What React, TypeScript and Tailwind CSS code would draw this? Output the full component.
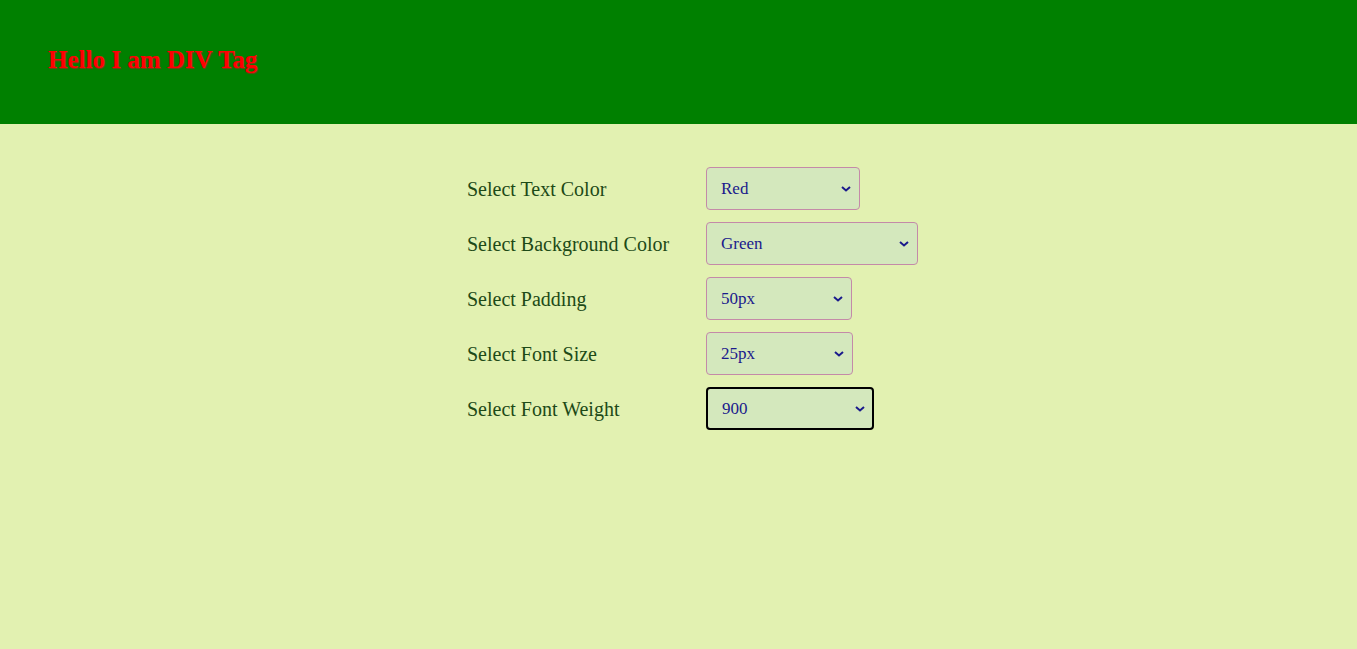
import { useState } from "react"

const rows = [
  { label: "Select Text Color", value: "Red", options: ["Red", "Blue", "Black", "White"], width: "w-[154px]" },
  { label: "Select Background Color", value: "Green", options: ["Green", "Yellow", "Pink", "Gray"], width: "w-[212px]" },
  { label: "Select Padding", value: "50px", options: ["10px", "25px", "50px"], width: "w-[146px]" },
  { label: "Select Font Size", value: "25px", options: ["15px", "20px", "25px"], width: "w-[147px]" },
  { label: "Select Font Weight", value: "900", options: ["400", "700", "900"], width: "w-[168px]" },
]

function Chevron() {
  return (
    <svg viewBox="0 0 10 6" className="pointer-events-none absolute right-[9px] top-1/2 -mt-[3px] h-[6px] w-[10px]">
      <path d="M1 1l4 3.5L9 1" fill="none" stroke="#1a1a8c" strokeWidth="2" />
    </svg>
  )
}

export default function App() {
  const [values, setValues] = useState(rows.map((r) => r.value))

  return (
    <div className="min-h-[649px] w-full bg-[#e2f1b1] font-['Liberation_Serif',serif]">
      {/* Preview div */}
      <div className="h-[124px] bg-[#008000] pl-[48px] pt-[46px]">
        <div className="text-[25px] font-black leading-[28px] text-[#ff0000] [text-shadow:1px_1px_1px_#7a3a1a]">
          Hello I am DIV Tag
        </div>
      </div>

      {/* Controls */}
      <div className="flex justify-center pt-[43px]">
        <div className="flex w-[423px] flex-col gap-[12px]">
          {rows.map((row, i) => (
            <div key={row.label} className="flex h-[43px] items-center">
              <label className="w-[239px] shrink-0 pt-[1px] text-[20px] text-[#1d4a17]">{row.label}</label>
              <div className={`relative ${row.width} h-[43px] shrink-0`}>
                <select
                  value={values[i]}
                  onChange={(e) => {
                    const next = [...values]
                    next[i] = e.target.value
                    setValues(next)
                  }}
                  className={`h-full w-full appearance-none rounded-[4px] bg-[#d4e8bd] pl-[14px] text-[17px] text-[#1a1a8c] outline-none ${
                    i === 4 ? "border-2 border-black" : "border border-[#c48aa8]"
                  }`}
                >
                  {row.options.map((o) => (
                    <option key={o}>{o}</option>
                  ))}
                </select>
                <Chevron />
              </div>
            </div>
          ))}
        </div>
      </div>
    </div>
  )
}
